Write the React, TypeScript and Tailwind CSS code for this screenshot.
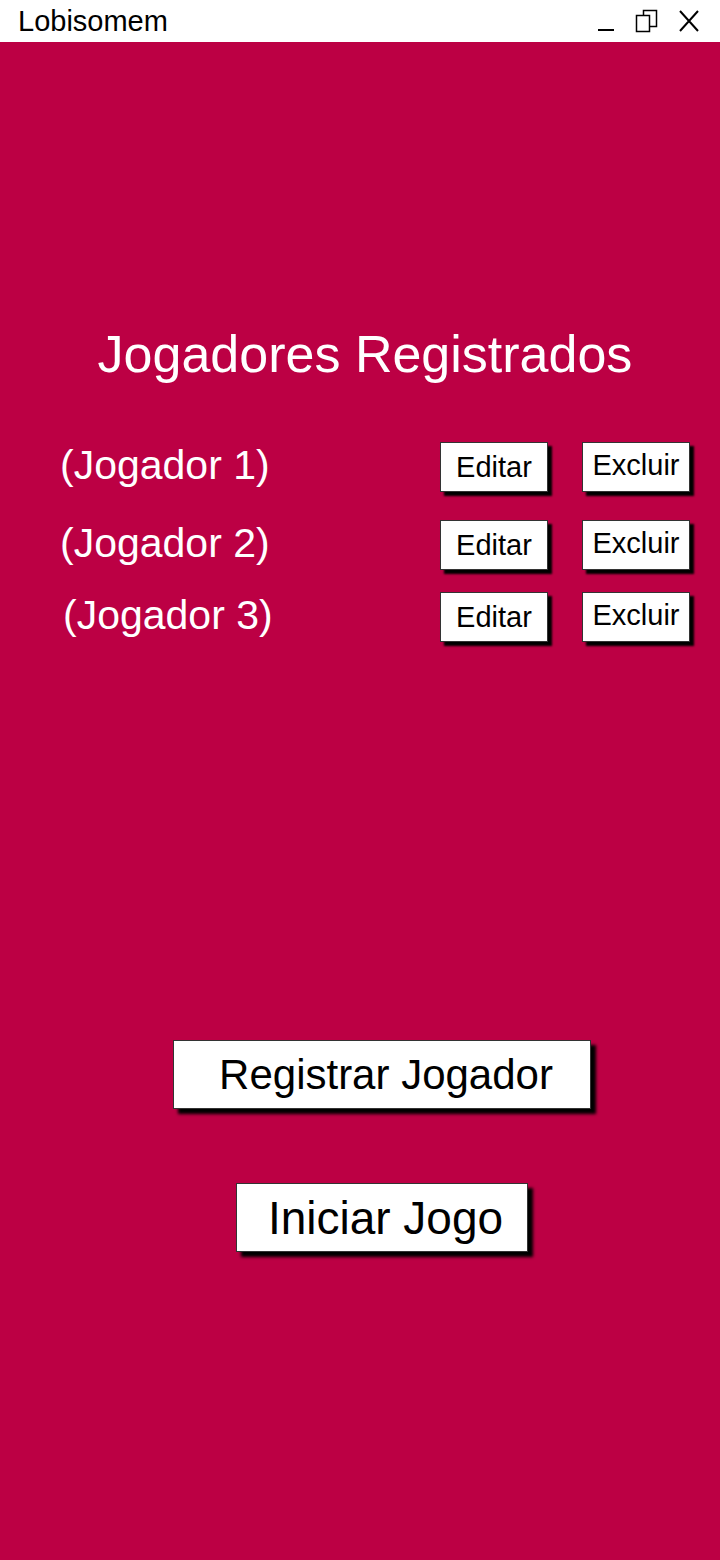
import React from 'react'

const players = [
  { name: '(Jogador 1)', mt: 'mt-[62px]', ml: 'ml-[60px]' },
  { name: '(Jogador 2)', mt: 'mt-[28px]', ml: 'ml-[60px]' },
  { name: '(Jogador 3)', mt: 'mt-[22px]', ml: 'ml-[63px]' },
]

function TitleBar() {
  return (
    <div className="h-[42px] bg-white flex items-center justify-between pl-[18px] pr-[20px]">
      <span className="text-[29px] leading-none text-black">Lobisomem</span>
      <div className="flex items-center gap-[20px]">
        <svg width="18" height="24" viewBox="0 0 18 24">
          <rect x="1" y="20" width="16" height="2" fill="black" />
        </svg>
        <svg width="23" height="24" viewBox="0 0 23 24">
          <rect x="8.5" y="1.5" width="13" height="16" fill="white" stroke="black" strokeWidth="1.5" />
          <rect x="1.5" y="6.5" width="13" height="16" fill="white" stroke="black" strokeWidth="1.5" />
        </svg>
        <svg width="22" height="22" viewBox="0 0 22 22">
          <path d="M2 1 L20 21 M20 1 L2 21" stroke="black" strokeWidth="2" fill="none" />
        </svg>
      </div>
    </div>
  )
}

function SmallButton({ label, lift }: { label: string; lift?: boolean }) {
  return (
    <button
      className={
        'w-[108px] h-[50px] bg-white border border-[#333] shadow-[4px_4px_2px_rgba(0,0,0,1)] text-black text-[29px] leading-none flex items-center justify-center ' +
        (lift ? 'pb-[4px]' : '')
      }
    >
      {label}
    </button>
  )
}

export default function App() {
  return (
    <div className="w-[720px] h-[1560px] flex flex-col bg-[#bc0044] font-['Liberation_Sans',Arial,sans-serif]">
      <TitleBar />
      <div className="flex-1 flex flex-col">
        <h1 className="mt-[286px] text-center text-white text-[52px] leading-none pl-[10px]">
          Jogadores Registrados
        </h1>

        {players.map(p => (
          <div key={p.name} className={'flex items-center pr-[30px] ' + p.mt}>
            <span className={'flex-1 text-white text-[41px] leading-none pb-[4px] ' + p.ml}>{p.name}</span>
            <div className="flex gap-[34px]">
              <SmallButton label="Editar" />
              <SmallButton label="Excluir" lift />
            </div>
          </div>
        ))}

        <div className="mt-[398px] flex flex-col items-center pl-[44px] gap-[74px]">
          <button className="w-[418px] h-[69px] bg-white border border-[#333] shadow-[5px_5px_3px_rgba(0,0,0,1)] text-black text-[42px] leading-none flex items-center justify-center pl-[8px]">
            Registrar Jogador
          </button>
          <button className="w-[292px] h-[69px] bg-white border border-[#333] shadow-[5px_5px_3px_rgba(0,0,0,1)] text-black text-[46px] leading-none flex items-center justify-center pl-[7px]">
            Iniciar Jogo
          </button>
        </div>
      </div>
    </div>
  )
}
